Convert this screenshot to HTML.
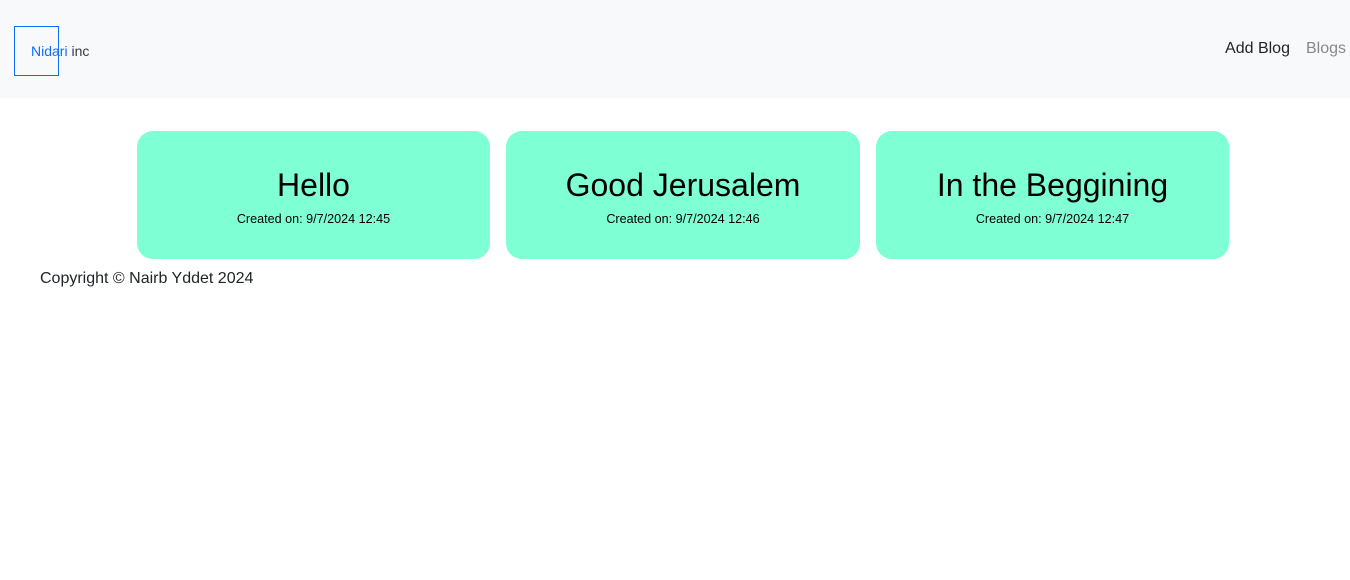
<!DOCTYPE html>
<html><head><style>
body{margin:0;font-family:"Liberation Sans",sans-serif;background:#fff;width:1350px;height:580px;overflow:hidden}
.nav{height:98px;background:#f8f9fa;position:relative}
.logo{position:absolute;left:14px;top:26px;width:43px;height:48px;border:1px solid #0d6efd}
.lt{position:absolute;left:31px;top:43px;font-size:14px;font-family:"Liberation Sans",sans-serif;letter-spacing:0px}
.lt .a{color:#0d6efd}.lt .b{color:#343a40}
.links{position:absolute;top:40px;right:4px;font-size:16px}
.links span{margin-left:16px}
.card{position:absolute;top:131px;height:128px;width:353px;background:#7fffd4;border-radius:16px;text-align:center}
.card h2{margin:36px 0 0;font-weight:normal;font-size:32px;line-height:36px;color:#000}
.card p{margin:9px 0 0;font-size:12.6px;color:#000}
.foot{position:absolute;left:40px;top:270px;font-size:16px;color:#212529}
</style></head><body>
<div class="nav"><div class="logo"></div><div class="lt"><span class="a">Nidari</span> <span class="b">inc</span></div>
<div class="links"><span style="color:#212529">Add Blog</span><span style="color:#888">Blogs</span></div></div>
<div class="card" style="left:137px"><h2>Hello</h2><p>Created on: 9/7/2024 12:45</p></div>
<div class="card" style="left:506px;width:354px"><h2>Good Jerusalem</h2><p>Created on: 9/7/2024 12:46</p></div>
<div class="card" style="left:876px"><h2>In the Beggining</h2><p>Created on: 9/7/2024 12:47</p></div>
<div class="foot">Copyright © Nairb Yddet 2024</div>
</body></html>
